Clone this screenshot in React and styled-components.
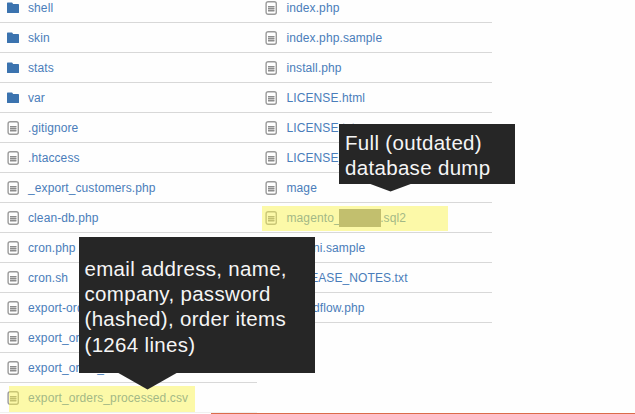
import React from "react";
import styled, { createGlobalStyle } from "styled-components";

const GlobalStyle = createGlobalStyle`
  body { margin: 0; background: #fefefe; overflow: hidden; }
`;

const Page = styled.main`
  position: relative;
  width: 635px;
  height: 414px;
  overflow: hidden;
  background: #fefefe;
  font-family: "Liberation Sans", Arial, sans-serif;
`;

const Listing = styled.div`
  display: grid;
  grid-template-columns: 257px 235px;
  align-items: start;
  margin-top: -7px;
`;

const Column = styled.ul`
  list-style: none;
  margin: 0;
  padding: 0;
`;

const Row = styled.li`
  display: flex;
  align-items: center;
  box-sizing: border-box;
  height: 30px;
  padding-left: ${(p) => (p.$inset ? 8 : 7)}px;
  border-bottom: 1px solid ${(p) => (p.$faint ? "#f0f0f0" : "#d8d8d8")};
`;

const IconSlot = styled.span`
  display: flex;
  flex: none;
  width: ${(p) => (p.$inset ? 21.5 : 21)}px;

  svg { display: block; }
`;

const Name = styled.a`
  display: flex;
  align-items: center;
  color: #4a7dba;
  font-size: 12px;
  line-height: 16px;
  letter-spacing: 0.1px;
  white-space: nowrap;
`;

const Redacted = styled.span`
  width: 42px;
  height: 18px;
  margin: -1px -1px -1px -1.5px;
  background: #8a8a8a;
`;

const Highlight = styled.div`
  position: absolute;
  left: ${(p) => p.$x}px;
  top: ${(p) => p.$y}px;
  width: ${(p) => p.$w}px;
  height: ${(p) => p.$h}px;
  background: rgba(250, 244, 82, 0.5);
`;

const Callout = styled.div`
  position: absolute;
  box-sizing: border-box;
  left: ${(p) => p.$x}px;
  top: ${(p) => p.$y}px;
  width: ${(p) => p.$w}px;
  height: ${(p) => p.$h}px;
  padding: ${(p) => p.$pad}px 0 0 6px;
  background: #262626;
  color: #f5f5f5;
  font-size: 20.5px;
  line-height: 25.4px;
  letter-spacing: 0.32px;
  white-space: pre;

  &::after {
    content: "";
    position: absolute;
    top: 100%;
    left: ${(p) => p.$tailX}px;
    width: ${(p) => p.$tailW}px;
    height: ${(p) => p.$tailH}px;
    margin-top: -0.5px;
    background: #262626;
    clip-path: polygon(0 0, 100% 0, 50% 100%);
  }
`;

const BottomRule = styled.div`
  position: absolute;
  left: 211px;
  right: 0;
  top: 413px;
  height: 1px;
  background: #dc6b4b;
`;

const FolderIcon = () => (
  <svg width="12" height="12" viewBox="0 0 12 12">
    <path d="M0 1.2Q0 .5.7.5H4.8Q5.5.5 5.7 1.3L6 2H11.3Q12 2 12 2.7V10.4Q12 11 11.3 11H.7Q0 11 0 10.4Z" fill="#3b73af" />
  </svg>
);

const FileIcon = () => (
  <svg width="12" height="14" viewBox="0 0 12 14">
    <rect x="1.1" y=".7" width="10.2" height="12.6" rx="2" fill="#fff" stroke="#9a9a9a" strokeWidth="1.4" />
    <rect x="3" y="5" width="6.4" height="6" fill="#c4c4c4" />
    <path d="M3 5.5H9.4M3 7.5H9.4M3 9.5H9.4" stroke="#8c8c8c" strokeWidth="1" />
  </svg>
);

const left = [
  { name: "shell", folder: true },
  { name: "skin", folder: true },
  { name: "stats", folder: true },
  { name: "var", folder: true },
  { name: ".gitignore" },
  { name: ".htaccess" },
  { name: "_export_customers.php" },
  { name: "clean-db.php" },
  { name: "cron.php" },
  { name: "cron.sh" },
  { name: "export-orders.php" },
  { name: "export_orders.php" },
  { name: "export_order_" },
  { name: "export_orders_processed.csv", faint: true },
];

const right = [
  { name: "index.php" },
  { name: "index.php.sample" },
  { name: "install.php" },
  { name: "LICENSE.html" },
  { name: "LICENSE.txt" },
  { name: "LICENSE_AFL.txt" },
  { name: "mage" },
  { name: "magento_", redactedTail: ".sql2" },
  { name: "php.ini.sample" },
  { name: "RELEASE_NOTES.txt" },
  { name: "speedflow.php" },
];

const FileColumn = ({ files, inset }) => (
  <Column>
    {files.map((f) => (
      <Row key={f.name} $inset={inset} $faint={f.faint}>
        <IconSlot $inset={inset}>{f.folder ? <FolderIcon /> : <FileIcon />}</IconSlot>
        <Name>
          {f.name}
          {f.redactedTail && (
            <>
              <Redacted />
              {f.redactedTail}
            </>
          )}
        </Name>
      </Row>
    ))}
  </Column>
);

export default function App() {
  return (
    <>
      <GlobalStyle />
      <Page>
        <Listing>
          <FileColumn files={left} />
          <FileColumn files={right} inset />
        </Listing>
        <Highlight $x={262} $y={206} $w={185.5} $h={25} />
        <Highlight $x={9} $y={386} $w={186} $h={26} />
        <BottomRule />
        <Callout $x={339} $y={123.5} $w={176} $h={60.5} $pad={6.5} $tailX={30} $tailW={43} $tailH={8}>
          {"Full (outdated)\ndatabase dump"}
        </Callout>
        <Callout $x={78.5} $y={237} $w={236} $h={136} $pad={18.5} $tailX={39} $tailW={60} $tailH={17}>
          {"email address, name,\ncompany, password\n(hashed), order items\n(1264 lines)"}
        </Callout>
      </Page>
    </>
  );
}
